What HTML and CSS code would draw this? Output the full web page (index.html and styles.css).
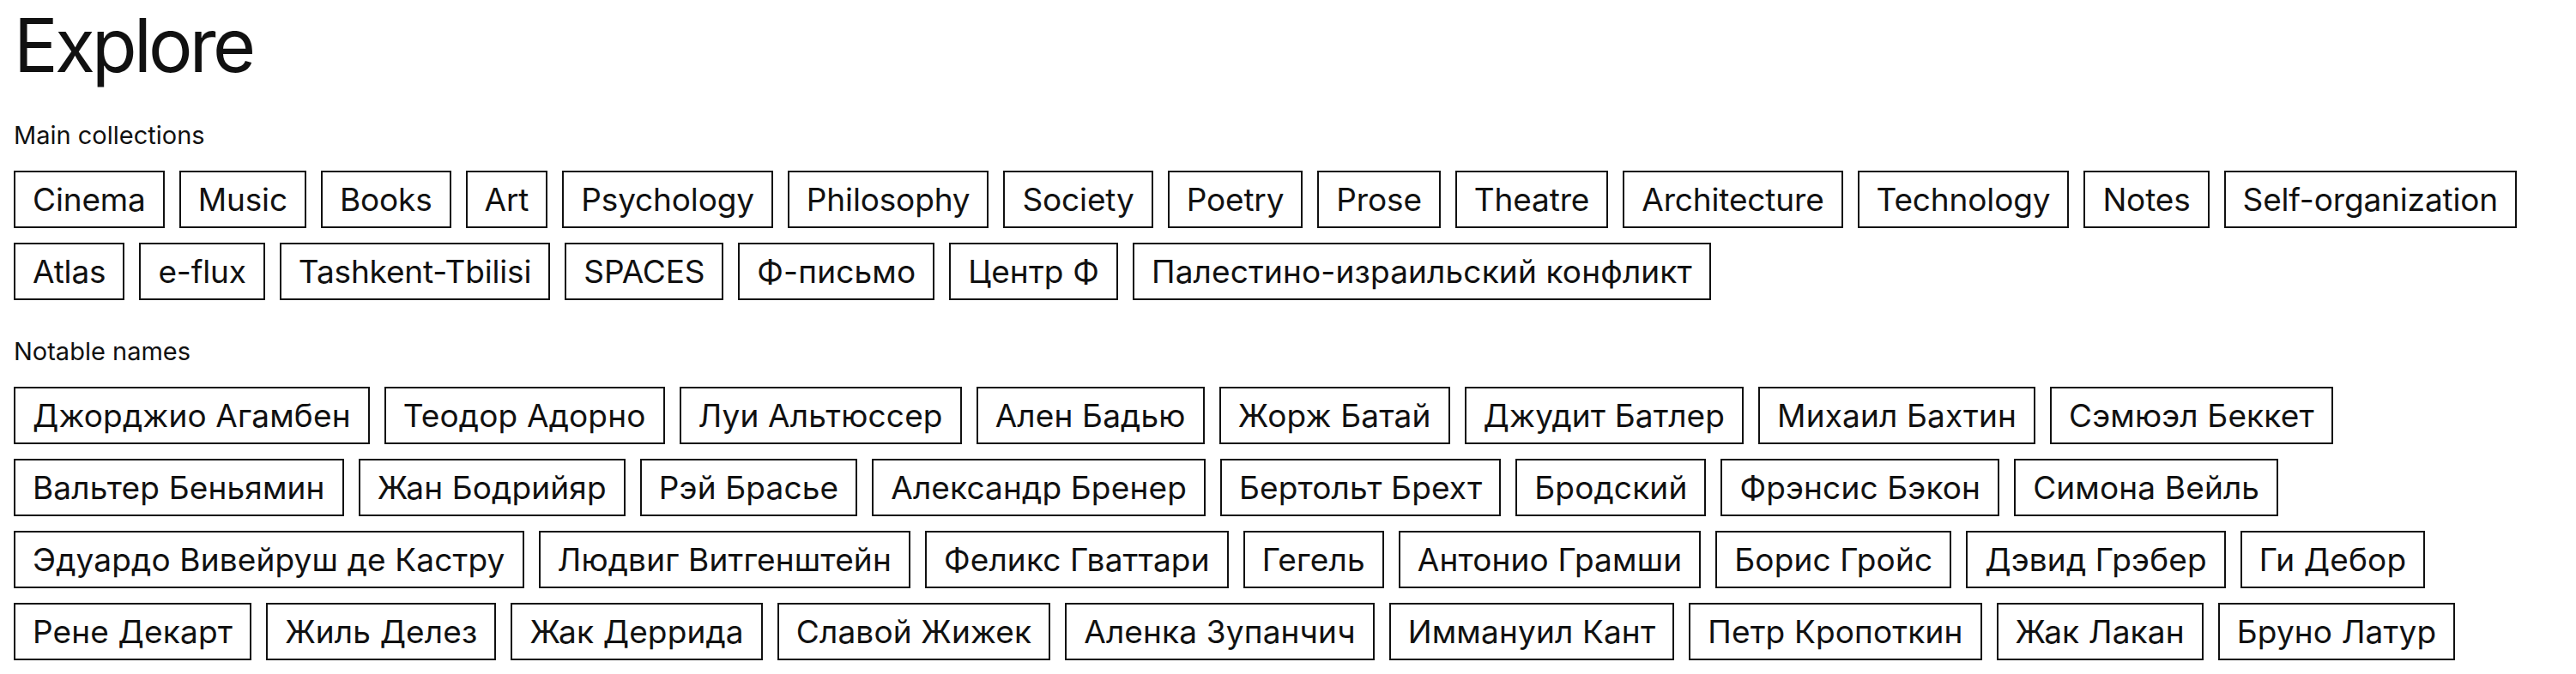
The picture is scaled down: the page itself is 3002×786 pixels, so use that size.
FILE: index.html
```html
<!DOCTYPE html>
<html lang="en">
<head>
	<meta charset="UTF-8">
	<title>Explore</title>
	<link rel="stylesheet" href="styles.css">
</head>
<body>
	<div class="explore">
		<h1 class="title">Explore</h1>

		<div class="group">
			<h2 class="group_title">Main collections</h2>
			<ul class="tags">
				<li><a href="#">Cinema</a></li>
				<li><a href="#">Music</a></li>
				<li><a href="#">Books</a></li>
				<li><a href="#">Art</a></li>
				<li><a href="#">Psychology</a></li>
				<li><a href="#">Philosophy</a></li>
				<li><a href="#">Society</a></li>
				<li><a href="#">Poetry</a></li>
				<li><a href="#">Prose</a></li>
				<li><a href="#">Theatre</a></li>
				<li><a href="#">Architecture</a></li>
				<li><a href="#">Technology</a></li>
				<li><a href="#">Notes</a></li>
				<li><a href="#">Self-organization</a></li>
				<li><a href="#">Atlas</a></li>
				<li><a href="#">e-flux</a></li>
				<li><a href="#">Tashkent-Tbilisi</a></li>
				<li><a href="#">SPACES</a></li>
				<li lang="ru"><a href="#">Ф-письмо</a></li>
				<li lang="ru"><a href="#">Центр Ф</a></li>
				<li lang="ru"><a href="#">Палестино-израильский конфликт</a></li>
			</ul>
		</div>

		<div class="group">
			<h2 class="group_title">Notable names</h2>
			<ul class="tags" lang="ru">
				<li><a href="#">Джорджио Агамбен</a></li>
				<li><a href="#">Теодор Адорно</a></li>
				<li><a href="#">Луи Альтюссер</a></li>
				<li><a href="#">Ален Бадью</a></li>
				<li><a href="#">Жорж Батай</a></li>
				<li><a href="#">Джудит Батлер</a></li>
				<li><a href="#">Михаил Бахтин</a></li>
				<li><a href="#">Сэмюэл Беккет</a></li>
				<li><a href="#">Вальтер Беньямин</a></li>
				<li><a href="#">Жан Бодрийяр</a></li>
				<li><a href="#">Рэй Брасье</a></li>
				<li><a href="#">Александр Бренер</a></li>
				<li><a href="#">Бертольт Брехт</a></li>
				<li><a href="#">Бродский</a></li>
				<li><a href="#">Фрэнсис Бэкон</a></li>
				<li><a href="#">Симона Вейль</a></li>
				<li><a href="#">Эдуардо Вивейруш де Кастру</a></li>
				<li><a href="#">Людвиг Витгенштейн</a></li>
				<li><a href="#">Феликс Гваттари</a></li>
				<li><a href="#">Гегель</a></li>
				<li><a href="#">Антонио Грамши</a></li>
				<li><a href="#">Борис Гройс</a></li>
				<li><a href="#">Дэвид Грэбер</a></li>
				<li><a href="#">Ги Дебор</a></li>
				<li><a href="#">Рене Декарт</a></li>
				<li><a href="#">Жиль Делез</a></li>
				<li><a href="#">Жак Деррида</a></li>
				<li><a href="#">Славой Жижек</a></li>
				<li><a href="#">Аленка Зупанчич</a></li>
				<li><a href="#">Иммануил Кант</a></li>
				<li><a href="#">Петр Кропоткин</a></li>
				<li><a href="#">Жак Лакан</a></li>
				<li><a href="#">Бруно Латур</a></li>
			</ul>
		</div>
	</div>
</body>
</html>
```

FILE: styles.css
```css
*{margin:0;padding:0;box-sizing:border-box;}
ul{list-style:none;}
body{font-family:Inter,"Noto Sans",sans-serif;color:#111;background:#fff;}
.explore{padding:0 16px;}
.title{font-size:86px;font-weight:400;line-height:106px;letter-spacing:-0.044em;}
.group{margin-top:34px;}
.group+.group{margin-top:42px;}
.group_title{font-size:29px;font-weight:400;line-height:36px;margin-bottom:23px;}
.tags{display:flex;flex-wrap:wrap;gap:17px;}
.tags a{display:block;border:2px solid #111;padding:10px 20px;font-size:37px;line-height:43px;color:#111;text-decoration:none;white-space:nowrap;letter-spacing:-0.15px;}
.tags a:lang(ru){letter-spacing:0.15px;}
```
